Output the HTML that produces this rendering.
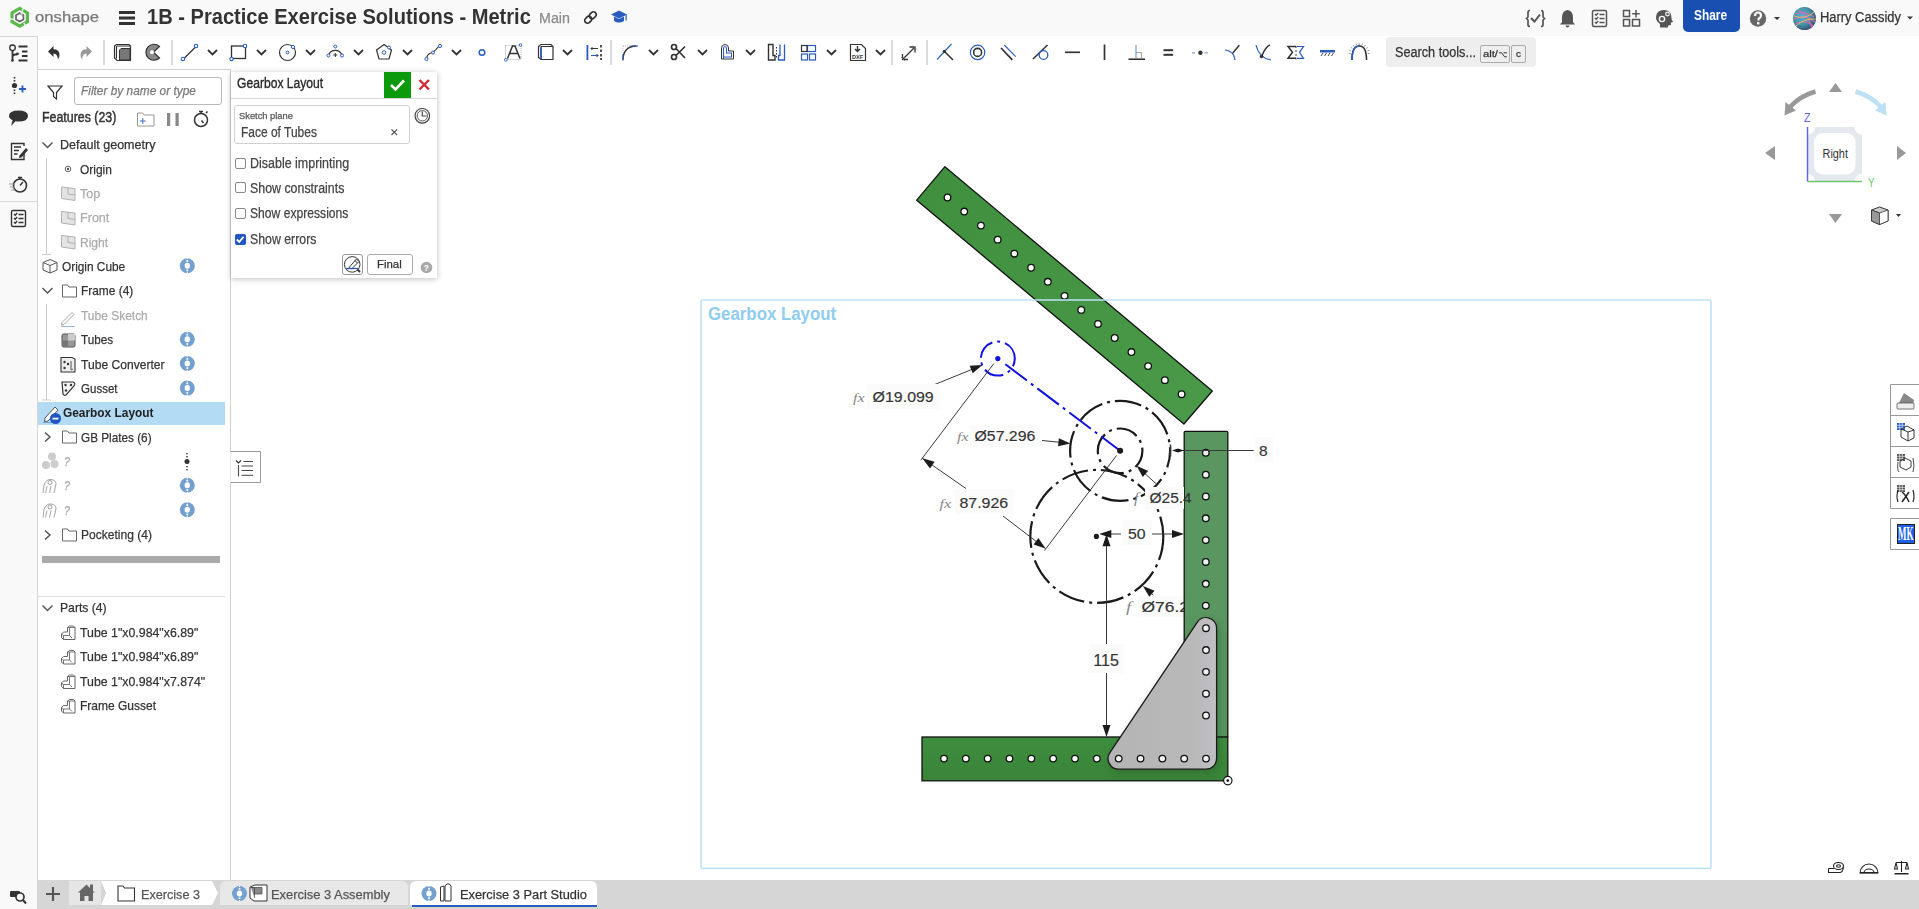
<!DOCTYPE html><html><head><meta charset="utf-8"><style>
*{box-sizing:border-box;margin:0;padding:0}
html,body{width:1919px;height:909px;overflow:hidden;background:#fff;font-family:"Liberation Sans",sans-serif;color:#333}
.a{position:absolute;white-space:nowrap}
.b{position:absolute}
svg{position:absolute;overflow:visible}
</style></head><body>
<div class="b" style="left:0px;top:0px;width:1919px;height:36px;background:#f9f9f9"></div>
<div class="b" style="left:0px;top:36px;width:38px;height:873px;background:#f9f9f9;border-top:1px solid #d6d6d6;border-right:1px solid #d6d6d6"></div>
<div class="b" style="left:38px;top:69px;width:193px;height:812px;background:#fff;border-top:1px solid #d0d0d0;border-right:1px solid #d0d0d0;border-bottom:1px solid #d0d0d0"></div>
<div class="b" style="left:38px;top:880px;width:1881px;height:29px;background:#d6d6d6"></div>
<div class="b" style="left:1683px;top:0px;width:57px;height:32px;background:#1a4fb2;border-radius:0 0 5px 5px"></div>
<div class="b" style="left:1386px;top:37px;width:150px;height:30px;background:#eeeeee;border-radius:4px"></div>
<div class="b" style="left:1480px;top:45px;width:29.5px;height:18px;border:1px solid #aaa;border-radius:2px"></div>
<div class="b" style="left:1510.5px;top:45px;width:15.5px;height:18px;border:1px solid #aaa;border-radius:2px"></div>
<div class="b" style="left:74px;top:77px;width:148px;height:28px;border:1px solid #bbb;border-radius:3px"></div>
<div class="b" style="left:38px;top:402px;width:187px;height:23px;background:#b3dcf4"></div>
<div class="b" style="left:42px;top:556px;width:178px;height:7px;background:#aaaaaa"></div>
<div class="b" style="left:38px;top:596px;width:187px;height:1px;background:#dddddd"></div>
<div class="b" style="left:69px;top:881px;width:32px;height:24px;background:#e6e6e6"></div>
<div class="b" style="left:220px;top:881px;width:188px;height:24px;background:#e8e8e8;border-radius:6px 6px 0 0"></div>
<div class="b" style="left:410px;top:881px;width:187px;height:24px;background:#ffffff;border-radius:6px 6px 0 0"></div>
<div class="b" style="left:412px;top:905px;width:185px;height:1.5px;background:#2a5bbf"></div>
<svg style="left:0;top:0" width="1919" height="909" viewBox="0 0 1919 909" font-family="Liberation Sans, sans-serif"><defs><linearGradient id="gb" x1="0" y1="0" x2="0" y2="1"><stop offset="0" stop-color="#3f8d3f"/><stop offset="1" stop-color="#3a8539"/></linearGradient><linearGradient id="gu" x1="0" y1="0" x2="1" y2="1"><stop offset="0" stop-color="#3f8f3f"/><stop offset="1" stop-color="#4a9a4a"/></linearGradient><linearGradient id="gg" x1="0" y1="0" x2="1" y2="0"><stop offset="0" stop-color="#b4b4b4"/><stop offset="0.8" stop-color="#b9b9b9"/><stop offset="1" stop-color="#c0c0c4"/></linearGradient><filter id="gsh" x="-20%" y="-20%" width="140%" height="140%"><feGaussianBlur stdDeviation="4"/></filter></defs><text transform="translate(708.00,320.40) scale(0.9293,1)" font-size="18.12" fill="#8fcdef" font-weight="bold" font-style="normal" >Gearbox Layout</text><polygon points="944.9,166.7 1212.3,391 1183.9,424 916.7,200.2" fill="url(#gu)" stroke="#111" stroke-width="1.3" stroke-linejoin="round"/><circle cx="947.50" cy="197.50" r="3.3" fill="#ffffff" stroke="#111" stroke-width="1.3"/><circle cx="964.22" cy="211.55" r="3.3" fill="#ffffff" stroke="#111" stroke-width="1.3"/><circle cx="980.94" cy="225.60" r="3.3" fill="#ffffff" stroke="#111" stroke-width="1.3"/><circle cx="997.66" cy="239.65" r="3.3" fill="#ffffff" stroke="#111" stroke-width="1.3"/><circle cx="1014.38" cy="253.70" r="3.3" fill="#ffffff" stroke="#111" stroke-width="1.3"/><circle cx="1031.10" cy="267.75" r="3.3" fill="#ffffff" stroke="#111" stroke-width="1.3"/><circle cx="1047.82" cy="281.80" r="3.3" fill="#ffffff" stroke="#111" stroke-width="1.3"/><circle cx="1064.54" cy="295.85" r="3.3" fill="#ffffff" stroke="#111" stroke-width="1.3"/><circle cx="1081.26" cy="309.90" r="3.3" fill="#ffffff" stroke="#111" stroke-width="1.3"/><circle cx="1097.98" cy="323.95" r="3.3" fill="#ffffff" stroke="#111" stroke-width="1.3"/><circle cx="1114.70" cy="338.00" r="3.3" fill="#ffffff" stroke="#111" stroke-width="1.3"/><circle cx="1131.42" cy="352.05" r="3.3" fill="#ffffff" stroke="#111" stroke-width="1.3"/><circle cx="1148.14" cy="366.10" r="3.3" fill="#ffffff" stroke="#111" stroke-width="1.3"/><circle cx="1164.86" cy="380.15" r="3.3" fill="#ffffff" stroke="#111" stroke-width="1.3"/><circle cx="1181.58" cy="394.20" r="3.3" fill="#ffffff" stroke="#111" stroke-width="1.3"/><text transform="translate(1126.00,611.50) scale(1.2603,1)" font-size="15.22" fill="#888" font-weight="normal" font-style="italic" font-family="Liberation Serif">f</text><rect x="1138" y="596" width="52" height="21" fill="#fbfbfb"/><text transform="translate(1141.40,612.30) scale(1.1264,1)" font-size="15.51" fill="#333" font-weight="normal" font-style="normal" stroke="#333" stroke-width="0.15">Ø76.2</text><rect x="1184.2" y="431.3" width="43.6" height="306" rx="1" fill="#5a9660" stroke="#111" stroke-width="1.3"/><circle cx="1205.80" cy="452.80" r="3.3" fill="#eceeef" stroke="#111" stroke-width="1.3"/><circle cx="1205.80" cy="474.63" r="3.3" fill="#eceeef" stroke="#111" stroke-width="1.3"/><circle cx="1205.80" cy="496.46" r="3.3" fill="#eceeef" stroke="#111" stroke-width="1.3"/><circle cx="1205.80" cy="518.29" r="3.3" fill="#eceeef" stroke="#111" stroke-width="1.3"/><circle cx="1205.80" cy="540.12" r="3.3" fill="#eceeef" stroke="#111" stroke-width="1.3"/><circle cx="1205.80" cy="561.95" r="3.3" fill="#eceeef" stroke="#111" stroke-width="1.3"/><circle cx="1205.80" cy="583.78" r="3.3" fill="#eceeef" stroke="#111" stroke-width="1.3"/><circle cx="1205.80" cy="605.61" r="3.3" fill="#eceeef" stroke="#111" stroke-width="1.3"/><circle cx="1205.80" cy="627.44" r="3.3" fill="#eceeef" stroke="#111" stroke-width="1.3"/><circle cx="1205.80" cy="649.27" r="3.3" fill="#eceeef" stroke="#111" stroke-width="1.3"/><circle cx="1205.80" cy="671.10" r="3.3" fill="#eceeef" stroke="#111" stroke-width="1.3"/><circle cx="1205.80" cy="692.93" r="3.3" fill="#eceeef" stroke="#111" stroke-width="1.3"/><circle cx="1205.80" cy="714.76" r="3.3" fill="#eceeef" stroke="#111" stroke-width="1.3"/><rect x="922" y="737" width="305.8" height="43.8" fill="url(#gb)" stroke="#111" stroke-width="1.3"/><circle cx="944.00" cy="758.60" r="3.3" fill="#ffffff" stroke="#111" stroke-width="1.3"/><circle cx="965.83" cy="758.60" r="3.3" fill="#ffffff" stroke="#111" stroke-width="1.3"/><circle cx="987.66" cy="758.60" r="3.3" fill="#ffffff" stroke="#111" stroke-width="1.3"/><circle cx="1009.49" cy="758.60" r="3.3" fill="#ffffff" stroke="#111" stroke-width="1.3"/><circle cx="1031.32" cy="758.60" r="3.3" fill="#ffffff" stroke="#111" stroke-width="1.3"/><circle cx="1053.15" cy="758.60" r="3.3" fill="#ffffff" stroke="#111" stroke-width="1.3"/><circle cx="1074.98" cy="758.60" r="3.3" fill="#ffffff" stroke="#111" stroke-width="1.3"/><circle cx="1096.81" cy="758.60" r="3.3" fill="#ffffff" stroke="#111" stroke-width="1.3"/><circle cx="1118.64" cy="758.60" r="3.3" fill="#ffffff" stroke="#111" stroke-width="1.3"/><circle cx="1140.47" cy="758.60" r="3.3" fill="#ffffff" stroke="#111" stroke-width="1.3"/><circle cx="1162.30" cy="758.60" r="3.3" fill="#ffffff" stroke="#111" stroke-width="1.3"/><circle cx="1184.13" cy="758.60" r="3.3" fill="#ffffff" stroke="#111" stroke-width="1.3"/><circle cx="1205.96" cy="758.60" r="3.3" fill="#ffffff" stroke="#111" stroke-width="1.3"/><path d="M1216.6,628.2 L1216.6,758.6 A10.6,10.6 0 0 1 1206,769.2 L1118.7,769.2 A10.6,10.6 0 0 1 1109.89,752.70 L1197.19,622.30 A10.6,10.6 0 0 1 1216.6,628.2 Z" fill="#1a3d1a" opacity="0.35" filter="url(#gsh)" transform="translate(2,3)"/><path d="M1216.6,628.2 L1216.6,758.6 A10.6,10.6 0 0 1 1206,769.2 L1118.7,769.2 A10.6,10.6 0 0 1 1109.89,752.70 L1197.19,622.30 A10.6,10.6 0 0 1 1216.6,628.2 Z" fill="url(#gg)" stroke="#1a1a1a" stroke-width="1.3"/><circle cx="1206.00" cy="628.20" r="3.3" fill="#f2f2f4" stroke="#111" stroke-width="1.3"/><circle cx="1206.00" cy="650.03" r="3.3" fill="#f2f2f4" stroke="#111" stroke-width="1.3"/><circle cx="1206.00" cy="671.86" r="3.3" fill="#f2f2f4" stroke="#111" stroke-width="1.3"/><circle cx="1206.00" cy="693.69" r="3.3" fill="#f2f2f4" stroke="#111" stroke-width="1.3"/><circle cx="1206.00" cy="715.52" r="3.3" fill="#f2f2f4" stroke="#111" stroke-width="1.3"/><circle cx="1118.70" cy="758.60" r="3.3" fill="#f2f2f4" stroke="#111" stroke-width="1.3"/><circle cx="1140.53" cy="758.60" r="3.3" fill="#f2f2f4" stroke="#111" stroke-width="1.3"/><circle cx="1162.36" cy="758.60" r="3.3" fill="#f2f2f4" stroke="#111" stroke-width="1.3"/><circle cx="1184.19" cy="758.60" r="3.3" fill="#f2f2f4" stroke="#111" stroke-width="1.3"/><circle cx="1206.02" cy="758.60" r="3.3" fill="#f2f2f4" stroke="#111" stroke-width="1.3"/><circle cx="1227.8" cy="780.6" r="4.2" fill="#fff" stroke="#111" stroke-width="1.2"/><circle cx="1227.8" cy="780.6" r="1.3" fill="#111"/><rect x="701" y="300" width="1010" height="568.4" rx="1.5" fill="none" stroke="#c0e2f6" stroke-width="1.6"/><circle cx="1120.1" cy="450.8" r="50" fill="none" stroke="#1a1a1a" stroke-width="2.2" stroke-dasharray="27 5 3 5" stroke-dashoffset="10"/><circle cx="1120.1" cy="450.8" r="22.3" fill="none" stroke="#1a1a1a" stroke-width="2.2" stroke-dasharray="22 5 3 5" stroke-dashoffset="4"/><circle cx="1096.8" cy="536.4" r="66.5" fill="none" stroke="#1a1a1a" stroke-width="2.2" stroke-dasharray="27 5 3 5" stroke-dashoffset="3"/><circle cx="997.8" cy="358.6" r="17" fill="none" stroke="#1010e0" stroke-width="2" stroke-dasharray="20 5 3 5" stroke-dashoffset="12"/><line x1="1005.39" y1="364.32" x2="1120.10" y2="450.80" stroke="#1010e0" stroke-width="2" stroke-dasharray="27 5 3 5"/><circle cx="997.8" cy="358.6" r="2.6" fill="#1010e0"/><circle cx="1120.1" cy="450.8" r="3" fill="#1a1a1a"/><circle cx="1096.3999999999999" cy="536.4" r="2.6" fill="#1a1a1a"/><line x1="935.00" y1="384.40" x2="975.00" y2="368.20" stroke="#3a3a3a" stroke-width="1" /><polygon points="982.30,365.00 972.72,373.25 969.68,365.85" fill="#1a1a1a"/><rect x="867" y="384" width="73" height="25" fill="#fbfbfb"/><text transform="translate(853.00,402.00) scale(1.2305,1)" font-size="13.04" fill="#888" font-weight="normal" font-style="italic" font-family="Liberation Serif">fx</text><text transform="translate(872.60,402.20) scale(1.0274,1)" font-size="15.51" fill="#333" font-weight="normal" font-style="normal" stroke="#333" stroke-width="0.15">Ø19.099</text><line x1="993.80" y1="363.60" x2="920.80" y2="460.20" stroke="#3a3a3a" stroke-width="1" /><line x1="1116.50" y1="455.50" x2="1044.50" y2="550.50" stroke="#3a3a3a" stroke-width="1" /><line x1="922.40" y1="458.30" x2="966.00" y2="488.50" stroke="#3a3a3a" stroke-width="1" /><polygon points="922.40,458.30 934.54,461.84 929.99,468.42" fill="#1a1a1a"/><line x1="1003.00" y1="516.00" x2="1045.50" y2="548.50" stroke="#3a3a3a" stroke-width="1" /><polygon points="1045.50,548.50 1033.54,544.39 1038.40,538.03" fill="#1a1a1a"/><rect x="955" y="489" width="58" height="25" fill="#fbfbfb"/><text transform="translate(939.60,507.70) scale(1.2494,1)" font-size="13.04" fill="#888" font-weight="normal" font-style="italic" font-family="Liberation Serif">fx</text><text transform="translate(959.40,507.70) scale(1.0284,1)" font-size="15.51" fill="#333" font-weight="normal" font-style="normal" stroke="#333" stroke-width="0.15">87.926</text><line x1="1042.00" y1="440.50" x2="1062.00" y2="442.50" stroke="#3a3a3a" stroke-width="1" /><polygon points="1070.40,443.50 1058.05,446.22 1058.89,438.26" fill="#1a1a1a"/><rect x="970" y="426" width="70" height="21" fill="#fbfbfb"/><text transform="translate(957.00,441.00) scale(1.2305,1)" font-size="13.04" fill="#888" font-weight="normal" font-style="italic" font-family="Liberation Serif">fx</text><text transform="translate(974.50,440.90) scale(1.0224,1)" font-size="15.51" fill="#333" font-weight="normal" font-style="normal" stroke="#333" stroke-width="0.15">Ø57.296</text><line x1="1156.00" y1="483.70" x2="1143.00" y2="471.70" stroke="#3a3a3a" stroke-width="1" /><polygon points="1136.60,465.80 1148.13,471.00 1142.71,476.88" fill="#1a1a1a"/><rect x="1145" y="487" width="39" height="22" fill="#fbfbfb"/><text transform="translate(1134.00,503.00) scale(1.0802,1)" font-size="15.22" fill="#888" font-weight="normal" font-style="italic" font-family="Liberation Serif">f</text><text x="1149.50" y="503.00" font-size="15.51" fill="#333" font-weight="normal" font-style="normal" stroke="#333" stroke-width="0.15">Ø25.4</text><line x1="1176.00" y1="450.50" x2="1253.70" y2="450.50" stroke="#3a3a3a" stroke-width="1" /><line x1="1170.50" y1="444.50" x2="1170.50" y2="456.50" stroke="#3a3a3a" stroke-width="1.6" /><polygon points="1172.00,450.50 1178.00,448.50 1178.00,452.50" fill="#1a1a1a"/><polygon points="1184.00,450.50 1178.00,452.50 1178.00,448.50" fill="#1a1a1a"/><rect x="1255" y="437" width="18" height="25" fill="#fbfbfb"/><text transform="translate(1259.00,456.00) scale(1.0087,1)" font-size="15.36" fill="#333" font-weight="normal" font-style="normal" stroke="#333" stroke-width="0.15">8</text><line x1="1109.00" y1="534.00" x2="1121.00" y2="534.00" stroke="#3a3a3a" stroke-width="1" /><line x1="1152.00" y1="534.00" x2="1174.00" y2="534.00" stroke="#3a3a3a" stroke-width="1" /><polygon points="1099.30,534.00 1111.30,530.00 1111.30,538.00" fill="#1a1a1a"/><polygon points="1184.00,534.00 1172.00,538.00 1172.00,530.00" fill="#1a1a1a"/><rect x="1122" y="520" width="30" height="25" fill="#fbfbfb"/><text transform="translate(1128.00,539.00) scale(1.0726,1)" font-size="14.78" fill="#333" font-weight="normal" font-style="normal" stroke="#333" stroke-width="0.15">50</text><line x1="1106.50" y1="545.00" x2="1106.50" y2="645.00" stroke="#3a3a3a" stroke-width="1" /><line x1="1106.50" y1="673.00" x2="1106.50" y2="727.00" stroke="#3a3a3a" stroke-width="1" /><polygon points="1106.50,534.30 1110.50,546.30 1102.50,546.30" fill="#1a1a1a"/><polygon points="1106.50,737.00 1102.50,725.00 1110.50,725.00" fill="#1a1a1a"/><rect x="1089" y="644" width="35" height="29" fill="#fbfbfb"/><text transform="translate(1093.20,665.60) scale(1.0107,1)" font-size="15.94" fill="#333" font-weight="normal" font-style="normal" stroke="#333" stroke-width="0.15">115</text><line x1="1153.40" y1="595.10" x2="1148.00" y2="590.50" stroke="#3a3a3a" stroke-width="1" /><polygon points="1142.90,585.90 1154.56,590.80 1149.29,596.82" fill="#1a1a1a"/><path d="M230.5,451.5 L260.5,451.5 L260.5,482.5 L230.5,482.5" fill="#fff" stroke="#999" stroke-width="1"/><path d="M236,460.5 L238.5,463 L241,460.5" fill="none" stroke="#333" stroke-width="1.2"/><line x1="238.5" y1="465" x2="238.5" y2="476.5" stroke="#555" stroke-width="1.2"/><path d="M243.5,461.5 h9.5 M241.5,466 h11.5 M241.5,470.5 h11.5 M241.5,475.3 h11.5" stroke="#444" stroke-width="1"/><path d="M1815.5,91.5 Q1800,96 1790,107" fill="none" stroke="#999" stroke-width="4.5"/><polygon points="1784.5,115.5 1785.5,102 1796,110.5" fill="#999"/><path d="M1855.5,91.5 Q1871,96 1881,107" fill="none" stroke="#bde0f3" stroke-width="4.5"/><polygon points="1886.5,115.5 1885.5,102 1875,110.5" fill="#bde0f3"/><polygon points="1829,92 1842,92 1835.5,83" fill="#999"/><polygon points="1829,214 1842,214 1835.5,223" fill="#999"/><polygon points="1775,146 1775,160 1765,153" fill="#999"/><polygon points="1897,146 1897,160 1906,153" fill="#999"/><path d="M1807.5,127 L1862,127 L1862,181.5 L1807.5,181.5 Z" fill="#e3e9ef"/><circle cx="1807.5" cy="127" r="7.5" fill="#fff"/><circle cx="1862" cy="127" r="7.5" fill="#fff"/><circle cx="1807.5" cy="181.5" r="7.5" fill="#fff"/><circle cx="1862" cy="181.5" r="7.5" fill="#fff"/><rect x="1814" y="133" width="41.5" height="41.5" rx="9" fill="#fff"/><line x1="1807.5" y1="127" x2="1807.5" y2="181.5" stroke="#6464ee" stroke-width="1.5"/><line x1="1807.5" y1="181.5" x2="1862" y2="181.5" stroke="#6cc46c" stroke-width="1.5"/><text transform="translate(1804.00,122.00) scale(0.8650,1)" font-size="12.32" fill="#6464ee" font-weight="normal" font-style="normal" >Z</text><text transform="translate(1868.00,187.00) scale(0.7935,1)" font-size="12.32" fill="#6cc46c" font-weight="normal" font-style="normal" >Y</text><text transform="translate(1822.50,158.00) scale(0.8865,1)" font-size="12.32" fill="#333" font-weight="normal" font-style="normal" >Right</text><path d="M1871.5,210 L1879.5,207 L1888,210 L1888,221 L1879.5,224.5 L1871.5,221 Z" fill="#ccc" stroke="#333" stroke-width="1"/><path d="M1871.5,210 L1879.5,213 L1888,210 L1888,221 L1879.5,224.5 Z" fill="#fff" stroke="#333" stroke-width="0.8"/><path d="M1871.5,210 L1879.5,213 L1879.5,224.5 L1871.5,221 Z" fill="#999" stroke="#333" stroke-width="0.8"/><polygon points="1896,214 1901,214 1898.5,217" fill="#333"/><path d="M1919,384.5 L1890.5,384.5 L1890.5,508.5 L1919,508.5 M1890.5,415.5 L1919,415.5 M1890.5,446.5 L1919,446.5 M1890.5,477.5 L1919,477.5 M1919,518.5 L1890.5,518.5 L1890.5,549.5 L1919,549.5" fill="#fff" stroke="#999" stroke-width="1"/><path d="M1897,407 L1904,393 L1914,400 L1913,407 Z" fill="#888"/><rect x="1897" y="403" width="17" height="6" rx="1" fill="#eee" stroke="#555" stroke-width="0.8"/><rect x="1897" y="423" width="8" height="7" fill="#2a5bd8"/><path d="M1899.7,423 v7 M1902.3,423 v7 M1897,425.3 h8 M1897,427.7 h8" stroke="#fff" stroke-width="0.6"/><path d="M1901,429 L1907,426 L1914,430 L1914,438 L1908,441 L1901,437 Z M1901,429 L1908,432 L1914,430 M1908,432 L1908,441" fill="none" stroke="#222" stroke-width="0.9"/><rect x="1897" y="454" width="8" height="7" fill="#555"/><path d="M1899.7,454 v7 M1902.3,454 v7 M1897,456.3 h8 M1897,458.7 h8" stroke="#fff" stroke-width="0.6"/><path d="M1900,461 L1905,458 L1911,461 L1911,467 L1906,470 L1900,467 Z" fill="none" stroke="#222" stroke-width="0.9"/><path d="M1898,462 Q1897,470 1899,472 M1913,458 Q1915,466 1913,472" fill="none" stroke="#333" stroke-width="0.9"/><rect x="1897" y="485" width="8" height="7" fill="#555"/><path d="M1899.7,485 v7 M1902.3,485 v7 M1897,487.3 h8 M1897,489.7 h8" stroke="#fff" stroke-width="0.6"/><path d="M1898,490 Q1896,497 1898,502 M1913,490 Q1915,497 1913,502" fill="none" stroke="#222" stroke-width="1.2"/><path d="M1902,502 L1909,492 M1902,492 Q1906,495 1909,502" fill="none" stroke="#222" stroke-width="1.5"/><rect x="1897.5" y="524.5" width="17" height="19" fill="#1f5fe8" stroke="#222" stroke-width="1"/><text transform="translate(1898,539.5) scale(0.5,1)" font-family="Liberation Serif" font-size="18" font-weight="bold" fill="#fff">MK</text><g fill="none" stroke="#222" stroke-width="1.1"><ellipse cx="1838.5" cy="866" rx="5" ry="3.5"/><ellipse cx="1838.5" cy="866" rx="2" ry="1.2"/><path d="M1828.5,868.5 L1834,868.5 M1828.5,868.5 L1828.5,872.5 L1840,872.5 Q1843,872 1843.5,867"/></g><path d="M1860,873 A9,9 0 0 1 1878,873 Z M1864,873 A5,4 0 0 1 1874,873" fill="none" stroke="#222" stroke-width="1.1"/><rect x="1860" y="872" width="18" height="1.3" fill="#222"/><g stroke="#222" fill="none" stroke-width="1.1"><path d="M1901.5,861 L1901.5,872 M1896,862.5 L1907,862.5 M1896,862.5 L1894.5,869 L1897.5,869 Z M1907,862.5 L1905.5,869 L1908.5,869 Z"/></g><rect x="1894.5" y="873" width="14" height="1.5" fill="#222"/></svg>
<svg style="left:0;top:0" width="1919" height="909" viewBox="0 0 1919 909"><g transform="translate(19.7,17.3)"><polygon points="0,-8.9 7.7,-4.45 7.7,4.45 0,8.9 -7.7,4.45 -7.7,-4.45" fill="none" stroke="#5cb84c" stroke-width="3.2" stroke-linejoin="miter"/><path d="M2.5,-5.5 L3.5,-9.5 M-4.5,2 L-10,1.5 M4.2,5.5 L6,9.5" stroke="#f9f9f9" stroke-width="1.3"/><polygon points="0,-4.3 3.7,-2.15 3.7,2.15 0,4.3 -3.7,2.15 -3.7,-2.15" fill="none" stroke="#666" stroke-width="1.7"/><path d="M1.2,-4.5 L2.2,-2.5" stroke="#f9f9f9" stroke-width="1"/></g><rect x="119" y="11" width="16" height="3" fill="#333"/><rect x="119" y="16.5" width="16" height="3" fill="#333"/><rect x="119" y="22" width="16" height="3" fill="#333"/><g transform="translate(590.5,17.5) rotate(-45)" fill="none" stroke="#333" stroke-width="1.7"><rect x="-7" y="-2.8" width="7.5" height="5.6" rx="2.8"/><rect x="-0.5" y="-2.8" width="7.5" height="5.6" rx="2.8"/></g><g fill="#2a5bbf"><polygon points="611,14.5 619,10.5 627,14.5 619,18.5"/><path d="M614,16.5 L614,21 Q619,24 624,21 L624,16.5 L619,19 Z"/><rect x="625.5" y="14.5" width="1.2" height="6"/></g><g fill="none" stroke="#555" stroke-width="1.7"><path d="M1530,10.5 Q1528,10.5 1528,12.5 L1528,17 L1526.5,18.5 L1528,20 L1528,24.5 Q1528,26.5 1530,26.5"/><path d="M1541,10.5 Q1543,10.5 1543,12.5 L1543,17 L1544.5,18.5 L1543,20 L1543,24.5 Q1543,26.5 1541,26.5"/><path d="M1531,18 L1534.5,21.5 L1540,14.5" stroke-width="2"/></g><path d="M1567.5,10 Q1573,10.5 1573,18 L1573,22 L1575,24.5 L1560,24.5 L1562,22 L1562,18 Q1562,10.5 1567.5,10 Z M1565.5,25.5 L1569.5,25.5 Q1569,27.5 1567.5,27.5 Q1566,27.5 1565.5,25.5Z" fill="#555"/><g fill="none" stroke="#555" stroke-width="1.5"><rect x="1592.5" y="10.5" width="14" height="16" rx="1.5"/><path d="M1595,14 l1.2,1.2 l2,-2.2 M1595,18 l1.2,1.2 l2,-2.2 M1595,22 l1.2,1.2 l2,-2.2 M1599.5,14.5 h5 M1599.5,18.5 h5 M1599.5,22.5 h5"/></g><g fill="none" stroke="#555" stroke-width="1.5"><rect x="1623.5" y="10.5" width="6" height="6"/><rect x="1623.5" y="19.5" width="6" height="6.5"/><rect x="1632.5" y="19.5" width="7" height="6.5"/><path d="M1636,10 v7.5 M1632.2,13.75 h7.5"/></g><path d="M1664,10 Q1671.5,10 1671.5,17.5 L1671.5,19 L1673,22 L1671,22.5 L1671,25 L1668,25.5 L1668,27.5 L1660,27.5 L1660,24 Q1656,21 1656,17.5 Q1656,10 1664,10 Z" fill="#555"/><circle cx="1662" cy="19" r="2.6" fill="none" stroke="#f9f9f9" stroke-width="1.4"/><circle cx="1667.5" cy="14" r="1.8" fill="none" stroke="#f9f9f9" stroke-width="1.2"/><circle cx="1758" cy="18.5" r="8.2" fill="#666"/><path d="M1755,16 Q1755,12.5 1758,12.5 Q1761,12.5 1761,15.5 Q1761,17.5 1758.8,18.5 L1758.2,20.5" fill="none" stroke="#f9f9f9" stroke-width="2.2"/><rect x="1757" y="22" width="2.4" height="2.4" fill="#f9f9f9"/><polygon points="1774,17 1780,17 1777,20" fill="#333"/><defs><radialGradient id="av" cx="40%" cy="40%" r="70%"><stop offset="0" stop-color="#5ad"/><stop offset="0.5" stop-color="#49a"/><stop offset="1" stop-color="#333a66"/></radialGradient></defs><circle cx="1804.5" cy="18.5" r="11.5" fill="url(#av)"/><path d="M1795,14 Q1805,10 1814,17 M1794,19 Q1805,14 1815,22 M1796,24 Q1806,19 1813,26 M1798,10 Q1808,14 1812,28" fill="none" stroke="#e6a" stroke-width="1.2" opacity="0.8"/><path d="M1794,16 Q1806,20 1814,12 M1796,26 Q1804,18 1816,19" fill="none" stroke="#ec5" stroke-width="1" opacity="0.8"/><polygon points="1907,16.5 1913,16.5 1910,19.5" fill="#333"/><path d="M48,51.5 L53.5,46 L53.5,49.3 Q59.5,49.3 59.5,55 Q59.5,57.5 58,59.5 Q57.5,53.5 53.5,53.5 L53.5,57 Z" fill="#333"/><path d="M92,51.5 L86.5,46 L86.5,49.3 Q80.5,49.3 80.5,55 Q80.5,57.5 82,59.5 Q82.5,53.5 86.5,53.5 L86.5,57 Z" fill="#999"/><rect x="103.25" y="40" width="1.5" height="25" fill="#cfcfcf"/><rect x="171.25" y="40" width="1.5" height="25" fill="#cfcfcf"/><rect x="610.25" y="40" width="1.5" height="25" fill="#cfcfcf"/><rect x="891.25" y="40" width="1.5" height="25" fill="#cfcfcf"/><rect x="926.25" y="40" width="1.5" height="25" fill="#cfcfcf"/><g fill="none" stroke="#333" stroke-width="1.2"><path d="M114.5,46 L116.5,44.5 L129,44.5 L130.5,46 L130.5,60.5 L117,60.5 L114.5,58 Z"/><path d="M116.5,46 L116.5,58.5 M117,46 L130,46"/></g><path d="M119.5,50 L121,48.5 L130,48.5 L130,60 L119.5,60 Z" fill="#777" stroke="#333" stroke-width="1"/><path d="M159.5,46.5 A8,8 0 1 0 159.5,58 L153.5,52.2 Z" fill="#888" stroke="#333" stroke-width="1.2"/><circle cx="152" cy="52.2" r="2" fill="#fff"/><line x1="183.5" y1="59" x2="196.5" y2="46" stroke="#333" stroke-width="1.3"/><circle cx="183" cy="59" r="1.7" fill="#fff" stroke="#2a5bbf" stroke-width="1.1"/><circle cx="196" cy="46" r="1.7" fill="#fff" stroke="#2a5bbf" stroke-width="1.1"/><path d="M208 50.0 L212.5 54.5 L217 50.0" fill="none" stroke="#333" stroke-width="1.8"/><rect x="231.5" y="46" width="14" height="12.5" fill="none" stroke="#333" stroke-width="1.3"/><circle cx="231.5" cy="59" r="1.7" fill="#fff" stroke="#2a5bbf" stroke-width="1.1"/><circle cx="245" cy="46" r="1.7" fill="#fff" stroke="#2a5bbf" stroke-width="1.1"/><path d="M257 50.0 L261.5 54.5 L266 50.0" fill="none" stroke="#333" stroke-width="1.8"/><circle cx="287.5" cy="52.5" r="8" fill="none" stroke="#333" stroke-width="1.2"/><circle cx="287.5" cy="52.5" r="1.4" fill="none" stroke="#2a5bbf" stroke-width="1"/><circle cx="293" cy="47" r="1.6" fill="#fff" stroke="#2a5bbf" stroke-width="1"/><path d="M306 50.0 L310.5 54.5 L315 50.0" fill="none" stroke="#333" stroke-width="1.8"/><path d="M328.5,55.5 A7,7 0 0 1 342,55.5" fill="none" stroke="#333" stroke-width="1.2"/><circle cx="328.5" cy="55.5" r="1.5" fill="#fff" stroke="#2a5bbf" stroke-width="1"/><circle cx="342" cy="55.5" r="1.5" fill="#fff" stroke="#2a5bbf" stroke-width="1"/><circle cx="335.3" cy="46.5" r="1.5" fill="#fff" stroke="#2a5bbf" stroke-width="1"/><path d="M335.3,53 v4 M333.3,55 h4" stroke="#333" stroke-width="1"/><path d="M354 50.0 L358.5 54.5 L363 50.0" fill="none" stroke="#333" stroke-width="1.8"/><polygon points="384,44.5 391.5,50 389,59 379,59 376.5,50" fill="none" stroke="#333" stroke-width="1.2"/><circle cx="384" cy="52.5" r="1.8" fill="none" stroke="#2a5bbf" stroke-width="1"/><circle cx="389" cy="47.5" r="1.5" fill="#fff" stroke="#2a5bbf" stroke-width="1"/><path d="M403 50.0 L407.5 54.5 L412 50.0" fill="none" stroke="#333" stroke-width="1.8"/><path d="M426.5,59 Q427,54 431,53 Q434,52 436,49.5 Q438,46.5 440,46" fill="none" stroke="#333" stroke-width="1.2"/><circle cx="426.5" cy="59" r="1.6" fill="#fff" stroke="#2a5bbf" stroke-width="1"/><circle cx="433" cy="52.5" r="1.5" fill="#fff" stroke="#2a5bbf" stroke-width="1"/><circle cx="440" cy="46" r="1.6" fill="#fff" stroke="#2a5bbf" stroke-width="1"/><path d="M452 50.0 L456.5 54.5 L461 50.0" fill="none" stroke="#333" stroke-width="1.8"/><circle cx="482" cy="52.5" r="2.8" fill="none" stroke="#2a5bbf" stroke-width="1.5"/><rect x="505.5" y="45.5" width="15.5" height="14" fill="none" stroke="#777" stroke-width="0.6" stroke-dasharray="1,1"/><path d="M507.5,58.5 L512.5,46 L515,46 L520,58.5 M510,53.5 L517.5,53.5" fill="none" stroke="#333" stroke-width="1.5"/><circle cx="520.5" cy="45" r="1.4" fill="#fff" stroke="#2a5bbf" stroke-width="0.9"/><circle cx="505.8" cy="59.8" r="1.4" fill="#fff" stroke="#2a5bbf" stroke-width="0.9"/><g fill="none" stroke="#333" stroke-width="1.2"><path d="M538.5,46.5 L541,44.5 L551,44.5 L553,46.5 L553,59.5 L541,59.5 L538.5,57.5 Z M541,46.5 L553,46.5 M541,46.5 L541,59.5"/></g><line x1="541" y1="47" x2="541" y2="59.5" stroke="#2a5bbf" stroke-width="1.5"/><path d="M563 50.0 L567.5 54.5 L572 50.0" fill="none" stroke="#333" stroke-width="1.8"/><rect x="586.5" y="45" width="1.8" height="15" fill="#2a5bbf"/><path d="M598,48.5 L591,48.5 M592.5,47 L591,48.5 L592.5,50 M591,55.5 L598,55.5 M596.5,54 L598,55.5 L596.5,57" fill="none" stroke="#333" stroke-width="1"/><path d="M591,55.5 L597,55.5" stroke="#2a5bbf" stroke-width="1.1"/><path d="M601,45 v2.5 M601,49.5 v2.5 M601,54 v2.5 M601,58 v2" stroke="#333" stroke-width="1.7"/><path d="M623,60 Q623,46.5 636.5,46" fill="none" stroke="#333" stroke-width="1.3"/><path d="M623,54 L623,60.5 M630.5,46 L638,46" stroke="#2a5bbf" stroke-width="1.1"/><path d="M623,46 L623,53 M623,46 L630,46" stroke="#999" stroke-width="0.6" stroke-dasharray="1,1"/><path d="M649 50.0 L653.5 54.5 L658 50.0" fill="none" stroke="#333" stroke-width="1.8"/><g fill="none" stroke="#333" stroke-width="1.7"><circle cx="674" cy="47" r="2.5"/><circle cx="674" cy="57" r="2.5"/><path d="M676,48.5 L685,58 M676,55.5 L685,46.5"/></g><path d="M698 50.0 L702.5 54.5 L707 50.0" fill="none" stroke="#333" stroke-width="1.8"/><path d="M721.5,59 L721.5,48 Q721.5,44.5 725,44.5 Q728.5,44.5 728.5,48 L728.5,51 L733.5,51 L733.5,59 Z" fill="none" stroke="#333" stroke-width="1"/><path d="M723.5,59 L723.5,48.5 Q723.5,46.5 725,46.5 Q726.5,46.5 726.5,48.5 L726.5,53 L731.5,53 L731.5,57 L723.5,57" fill="none" stroke="#2a5bbf" stroke-width="1.1"/><path d="M746 50.0 L750.5 54.5 L755 50.0" fill="none" stroke="#333" stroke-width="1.8"/><path d="M768.5,44.5 L773,44.5 L773,55.5 L775,55.5 L775,60 L768.5,60 Z" fill="none" stroke="#333" stroke-width="1.4"/><path d="M784.5,44.5 L784.5,60 L778.5,60 L778.5,55.5 L780,55.5 L780,44.5" fill="none" stroke="#2a5bbf" stroke-width="1.3"/><path d="M776.5,47 v1.5 M776.5,50 v1.5 M776.5,53 v1.5 M776.5,56 v1.5" stroke="#333" stroke-width="1"/><g fill="none" stroke="#2a5bbf" stroke-width="1.2"><rect x="807.5" y="45.5" width="8" height="6"/><rect x="801.5" y="54" width="6" height="6"/><rect x="809.5" y="54" width="6" height="6"/></g><rect x="801.5" y="45.5" width="5.5" height="6" fill="none" stroke="#333" stroke-width="1.2"/><path d="M827 50.0 L831.5 54.5 L836 50.0" fill="none" stroke="#333" stroke-width="1.8"/><path d="M850.5,44.5 L861.5,44.5 L865.5,48.5 L865.5,60.5 L850.5,60.5 Z" fill="none" stroke="#333" stroke-width="1.2"/><path d="M857.5,46 L857.5,51 M855,49 L857.5,51.5 L860,49" fill="none" stroke="#333" stroke-width="1.4"/><text x="852" y="59" font-size="5.5" font-weight="bold" fill="#333">DXF</text><path d="M876 50.0 L880.5 54.5 L885 50.0" fill="none" stroke="#333" stroke-width="1.8"/><g fill="none" stroke="#333" stroke-width="1.3"><path d="M903,59 L914.5,47.5"/><path d="M902.5,54 L902.5,59.5 L908,59.5 M909.5,47 L915,47 L915,52.5"/></g><path d="M913,45.5 L917,49.5 M901,57 L905,61" stroke="#888" stroke-width="0.8"/><line x1="937" y1="59.5" x2="951.5" y2="44" stroke="#2a5bbf" stroke-width="1.1"/><line x1="944.5" y1="51.5" x2="953" y2="60" stroke="#333" stroke-width="1.6"/><circle cx="944.3" cy="51.4" r="1.6" fill="#333"/><circle cx="977.6" cy="52.4" r="7.2" fill="none" stroke="#2a5bbf" stroke-width="1.2"/><circle cx="977.6" cy="52.4" r="4" fill="none" stroke="#333" stroke-width="1.6"/><line x1="1001" y1="48" x2="1012.3" y2="59.8" stroke="#333" stroke-width="1.7"/><line x1="1004.3" y1="45" x2="1015.7" y2="56.6" stroke="#2a5bbf" stroke-width="1.1"/><line x1="1033" y1="59" x2="1047.5" y2="45" stroke="#333" stroke-width="1.6"/><circle cx="1043.5" cy="55" r="4.3" fill="none" stroke="#2a5bbf" stroke-width="1.3"/><line x1="1065" y1="52.3" x2="1080" y2="52.3" stroke="#333" stroke-width="1.7"/><line x1="1104.5" y1="44.5" x2="1104.5" y2="60" stroke="#333" stroke-width="1.7"/><line x1="1128.5" y1="59.2" x2="1145" y2="59.2" stroke="#333" stroke-width="1.6"/><line x1="1136" y1="45" x2="1136" y2="58.5" stroke="#6f95d8" stroke-width="1.1"/><path d="M1136,52.5 L1141.5,52.5 L1141.5,58.5" fill="none" stroke="#999" stroke-width="0.9"/><rect x="1163.5" y="49.2" width="9.6" height="2" fill="#333"/><rect x="1163.5" y="53.8" width="9.6" height="2" fill="#333"/><path d="M1192,52.8 h3 M1204.5,52.8 h3.5" stroke="#8aa8e0" stroke-width="1.3"/><circle cx="1200.4" cy="52.8" r="2.2" fill="#333"/><path d="M1225,50 Q1234,51 1235,60" fill="none" stroke="#2a5bbf" stroke-width="1.2"/><line x1="1232.8" y1="53" x2="1239.3" y2="45.3" stroke="#333" stroke-width="1.5"/><path d="M1256,45 Q1259,58 1271,60" fill="none" stroke="#2a5bbf" stroke-width="1.1"/><path d="M1261.5,56.5 Q1266,46 1270,45" fill="none" stroke="#333" stroke-width="1.5"/><circle cx="1261.5" cy="56.5" r="1.8" fill="#333"/><path d="M1296,46.5 L1288,46.5 L1292.5,52.3 L1288,58.3 L1296,58.3" fill="none" stroke="#333" stroke-width="1.5"/><path d="M1296,46 v2 M1296,50 v2 M1296,54 v2 M1296,57.5 v2" stroke="#333" stroke-width="0.9"/><path d="M1297,46.5 L1303.5,46.5 L1299.5,52.3 L1303.5,58.3 L1297,58.3" fill="none" stroke="#2a5bbf" stroke-width="1.2"/><rect x="1320" y="50" width="15" height="2.5" fill="#2a5bbf"/><path d="M1321,56 l2,-3 M1324.5,56 l2,-3 M1328,56 l2,-3 M1331.5,56 l2,-3" stroke="#333" stroke-width="0.9"/><path d="M1352,60 Q1352,46 1359.3,46 Q1366.5,46 1366.5,60" fill="none" stroke="#333" stroke-width="1.6"/><path d="M1352,60 Q1352,46 1359.3,46" fill="none" stroke="#2a5bbf" stroke-width="1.6"/><line x1="1367.8" y1="53.5" x2="1369.8" y2="53.5" stroke="#555" stroke-width="0.6"/><line x1="1367.3839803885087" y1="50.87335554781295" x2="1369.2860934210992" y2="50.25532155906305" stroke="#555" stroke-width="0.6"/><line x1="1366.176644452187" y1="48.50382535551398" x2="1367.7946784409369" y2="47.328254850929035" stroke="#555" stroke-width="0.6"/><line x1="1364.296174644486" y1="46.62335554781295" x2="1365.471745149071" y2="45.00532155906305" stroke="#555" stroke-width="0.6"/><line x1="1361.926644452187" y1="45.416019611491194" x2="1362.5446784409369" y2="43.51390657890089" stroke="#555" stroke-width="0.6"/><line x1="1359.3" y1="45.0" x2="1359.3" y2="43.0" stroke="#555" stroke-width="0.6"/><line x1="1356.673355547813" y1="45.416019611491194" x2="1356.055321559063" y2="43.51390657890089" stroke="#555" stroke-width="0.6"/><line x1="1354.303825355514" y1="46.62335554781295" x2="1353.128254850929" y2="45.00532155906305" stroke="#555" stroke-width="0.6"/><line x1="1352.423355547813" y1="48.503825355513975" x2="1350.805321559063" y2="47.32825485092903" stroke="#555" stroke-width="0.6"/><line x1="1351.2160196114912" y1="50.87335554781295" x2="1349.3139065789007" y2="50.25532155906305" stroke="#555" stroke-width="0.6"/><line x1="1350.8" y1="53.5" x2="1348.8" y2="53.5" stroke="#555" stroke-width="0.6"/><g fill="none" stroke="#333" stroke-width="1.8"><circle cx="12.5" cy="47.8" r="2.8" stroke-width="1.3"/><path d="M12.5,50.5 L12.5,61 M12.5,57 Q12.5,54.5 15.5,54.5 L17,54.5"/><path d="M18.5,46.5 h9 M22,51.5 h5.5 M22,56 h5.5 M18.5,60.5 h9"/></g><circle cx="12.5" cy="60.5" r="1.3" fill="#333"/><circle cx="17.5" cy="53.8" r="1.4" fill="#333"/><g fill="#333"><circle cx="14.5" cy="85.5" r="2.6"/><rect x="13.7" y="77" width="1.6" height="1.6"/><rect x="13.7" y="80" width="1.6" height="1.6"/><rect x="13.7" y="89.5" width="1.6" height="1.6"/><rect x="13.7" y="92.5" width="1.6" height="1.6"/></g><path d="M19,89 h7 M22.5,85.5 v7" stroke="#2a5bbf" stroke-width="1.8"/><path d="M18.5,110.5 Q28,110.5 28,116 Q28,121.5 18.5,121.5 Q17,121.5 15.5,121.2 L11,126 L12.5,120.2 Q9,118.5 9,116 Q9,110.5 18.5,110.5 Z" fill="#333"/><g fill="none" stroke="#333" stroke-width="1.4"><path d="M24,151 L24,159.5 L11.5,159.5 L11.5,143.5 L24,143.5 L24,146"/><path d="M14,147 h7 M14,150.5 h5 M14,154 h3.5"/></g><path d="M19.5,155.5 L26,148 L28,150 L21.5,157.5 L19,158 Z" fill="#333"/><g fill="none" stroke="#333" stroke-width="1.6"><circle cx="20" cy="185.5" r="6.5"/><path d="M20,185.5 L23,182" stroke-width="1.3"/><path d="M18,177.5 h4 M20,177.5 v1.5"/></g><path d="M9,184 h6 M10,187 h5 M11,190 h4" stroke="#999" stroke-width="1"/><rect x="0" y="201" width="37" height="1" fill="#d6d6d6"/><g fill="none" stroke="#333" stroke-width="1.4"><rect x="11.5" y="210.5" width="14" height="16" rx="1.5"/><path d="M14,214 l1.2,1.2 l2,-2.2 M14,218 l1.2,1.2 l2,-2.2 M14,222 l1.2,1.2 l2,-2.2 M18.5,214.5 h5 M18.5,218.5 h5 M18.5,222.5 h5"/></g><g><rect x="10" y="891" width="10" height="6" rx="1" fill="#333"/><circle cx="20" cy="897" r="4" fill="#f9f9f9" stroke="#333" stroke-width="1.7"/><path d="M23,900 L26,903.5" stroke="#333" stroke-width="2"/></g><path d="M48,86 L62,86 L56.5,92.5 L56.5,99 L53.5,96.5 L53.5,92.5 Z" fill="none" stroke="#333" stroke-width="1.2"/><path d="M137.5,126 L137.5,113 L142.5,113 L144,115 L154,115 L154,126 Z" fill="none" stroke="#999" stroke-width="1"/><path d="M140,121 h5.5 M142.75,118.25 v5.5" stroke="#6f95d8" stroke-width="1.5"/><rect x="167" y="113" width="3.2" height="13" fill="#888"/><rect x="175.5" y="113" width="3.2" height="13" fill="#888"/><g fill="none" stroke="#333" stroke-width="1.5"><circle cx="201" cy="120" r="6.5"/><path d="M199,111.5 h4 M201,111.5 v2 M206,113 l1.5,-1.5 M201.5,120.5 L203.5,123"/></g><path d="M42.5,142.5 L47.5,147.5 L52.5,142.5" fill="none" stroke="#555" stroke-width="1.5"/><path d="M42.5,288 L47.5,293 L52.5,288" fill="none" stroke="#555" stroke-width="1.5"/><path d="M42.5,605.5 L47.5,610.5 L52.5,605.5" fill="none" stroke="#555" stroke-width="1.5"/><path d="M45,432.5 L50,437 L45,441.5" fill="none" stroke="#555" stroke-width="1.5"/><path d="M45,530.5 L50,535 L45,539.5" fill="none" stroke="#555" stroke-width="1.5"/><g stroke="#cccccc" stroke-width="1"><path d="M46.5,158 L46.5,254.5 M42,254.5 L51,254.5 M46.5,304 L46.5,400 M42,400 L51,400"/></g><circle cx="68" cy="169" r="2.8" fill="none" stroke="#555" stroke-width="0.9"/><circle cx="68" cy="169" r="1.2" fill="#555"/><path d="M61.5,187.0 L75,188.5 L75,200.5 L61.5,198.5 Z" fill="#e3e3e3" stroke="#aaa" stroke-width="0.9"/><path d="M68,187.7 L68,194.0 L75,195.0" fill="none" stroke="#aaa" stroke-width="0.9"/><path d="M61.5,211.5 L75,213 L75,225 L61.5,223 Z" fill="#e3e3e3" stroke="#aaa" stroke-width="0.9"/><path d="M68,212.2 L68,218.5 L75,219.5" fill="none" stroke="#aaa" stroke-width="0.9"/><path d="M61.5,235.5 L75,237 L75,249 L61.5,247 Z" fill="#e3e3e3" stroke="#aaa" stroke-width="0.9"/><path d="M68,236.2 L68,242.5 L75,243.5" fill="none" stroke="#aaa" stroke-width="0.9"/><g fill="none" stroke="#555" stroke-width="1"><path d="M50,259.5 L57,262.5 L57,270 L50,273 L43,270 L43,262.5 Z M43,262.5 L50,265.5 L57,262.5 M50,265.5 L50,273"/></g><path d="M62.5,297 L62.5,285 L67.5,285 L69,287 L76.5,287 L76.5,297 Z" fill="none" stroke="#666" stroke-width="1"/><path d="M62.5,443 L62.5,431 L67.5,431 L69,433 L76.5,433 L76.5,443 Z" fill="none" stroke="#666" stroke-width="1"/><path d="M62.5,541 L62.5,529 L67.5,529 L69,531 L76.5,531 L76.5,541 Z" fill="none" stroke="#666" stroke-width="1"/><path d="M62,322.5 L72,312.5 L74,314.5 L64,324.5 L61.5,325 Z" fill="none" stroke="#999" stroke-width="0.9"/><line x1="61" y1="326.5" x2="75" y2="326.5" stroke="#8aa8e0" stroke-width="0.9"/><rect x="62" y="334" width="13" height="13" rx="1.5" fill="#999" stroke="#555" stroke-width="1"/><rect x="68" y="334" width="7" height="6.5" fill="#ccc"/><rect x="62" y="340.5" width="6" height="6.5" fill="#777"/><path d="M61,357.5 L72,357.5 L75,359 L75,372 L61,372 Z" fill="#eee" stroke="#333" stroke-width="1.1"/><circle cx="64.5" cy="362" r="1.2" fill="#333"/><circle cx="68" cy="364" r="1.2" fill="#333"/><circle cx="64.5" cy="368" r="1.2" fill="#333"/><path d="M71,361 L71,370 L73,369" fill="none" stroke="#555" stroke-width="1"/><path d="M62,382 L73,382 Q76,383 74,386 L66,395 Q64,396 63,394 Z" fill="#f4f4f4" stroke="#333" stroke-width="1.2"/><circle cx="65.5" cy="385" r="1.2" fill="#333"/><circle cx="71" cy="385" r="1.2" fill="#333"/><circle cx="66" cy="390.5" r="1.2" fill="#333"/><path d="M45,418 L55,407 L58,410 L48,421 L44.5,421.5 Z" fill="#fff" stroke="#555" stroke-width="1"/><line x1="43" y1="422.5" x2="55" y2="422.5" stroke="#6f95d8" stroke-width="0.9"/><circle cx="55.5" cy="418.5" r="5.5" fill="#1f56c4"/><rect x="52.5" y="417.7" width="6" height="1.8" fill="#fff"/><g fill="#ccc"><circle cx="52" cy="456.5" r="4"/><circle cx="46" cy="465" r="4"/><circle cx="54.5" cy="464" r="4"/></g><g fill="none" stroke="#999" stroke-width="0.9"><path d="M44,485 Q46,479 51,479.5 Q56,480 56,484 L54,493 M44,485 L43,493 M47,486 L45.5,493 M51,486 L49.5,493"/><circle cx="50" cy="482.5" r="2"/></g><g fill="none" stroke="#999" stroke-width="0.9"><path d="M44,509.5 Q46,503.5 51,504.0 Q56,504.5 56,508.5 L54,517.5 M44,509.5 L43,517.5 M47,510.5 L45.5,517.5 M51,510.5 L49.5,517.5"/><circle cx="50" cy="507.0" r="2"/></g><circle cx="187.3" cy="265.7" r="7.5" fill="#73a0d0"/><ellipse cx="187.3" cy="265.7" rx="2.7" ry="3" fill="#fff"/><rect x="186.4" y="260.09999999999997" width="1.8" height="1.8" fill="#fff"/><rect x="186.4" y="269.5" width="1.8" height="1.8" fill="#fff"/><rect x="186.8" y="258.09999999999997" width="1" height="1.2" fill="#fff"/><rect x="186.8" y="272.09999999999997" width="1" height="1.2" fill="#fff"/><circle cx="187.3" cy="339.3" r="7.5" fill="#73a0d0"/><ellipse cx="187.3" cy="339.3" rx="2.7" ry="3" fill="#fff"/><rect x="186.4" y="333.7" width="1.8" height="1.8" fill="#fff"/><rect x="186.4" y="343.1" width="1.8" height="1.8" fill="#fff"/><rect x="186.8" y="331.7" width="1" height="1.2" fill="#fff"/><rect x="186.8" y="345.7" width="1" height="1.2" fill="#fff"/><circle cx="187.3" cy="363.5" r="7.5" fill="#73a0d0"/><ellipse cx="187.3" cy="363.5" rx="2.7" ry="3" fill="#fff"/><rect x="186.4" y="357.9" width="1.8" height="1.8" fill="#fff"/><rect x="186.4" y="367.3" width="1.8" height="1.8" fill="#fff"/><rect x="186.8" y="355.9" width="1" height="1.2" fill="#fff"/><rect x="186.8" y="369.9" width="1" height="1.2" fill="#fff"/><circle cx="187.3" cy="388.1" r="7.5" fill="#73a0d0"/><ellipse cx="187.3" cy="388.1" rx="2.7" ry="3" fill="#fff"/><rect x="186.4" y="382.5" width="1.8" height="1.8" fill="#fff"/><rect x="186.4" y="391.90000000000003" width="1.8" height="1.8" fill="#fff"/><rect x="186.8" y="380.5" width="1" height="1.2" fill="#fff"/><rect x="186.8" y="394.5" width="1" height="1.2" fill="#fff"/><circle cx="187.3" cy="485.3" r="7.5" fill="#73a0d0"/><ellipse cx="187.3" cy="485.3" rx="2.7" ry="3" fill="#fff"/><rect x="186.4" y="479.7" width="1.8" height="1.8" fill="#fff"/><rect x="186.4" y="489.1" width="1.8" height="1.8" fill="#fff"/><rect x="186.8" y="477.7" width="1" height="1.2" fill="#fff"/><rect x="186.8" y="491.7" width="1" height="1.2" fill="#fff"/><circle cx="187.3" cy="509.8" r="7.5" fill="#73a0d0"/><ellipse cx="187.3" cy="509.8" rx="2.7" ry="3" fill="#fff"/><rect x="186.4" y="504.2" width="1.8" height="1.8" fill="#fff"/><rect x="186.4" y="513.6" width="1.8" height="1.8" fill="#fff"/><rect x="186.8" y="502.2" width="1" height="1.2" fill="#fff"/><rect x="186.8" y="516.2" width="1" height="1.2" fill="#fff"/><circle cx="239.5" cy="893.5" r="7.5" fill="#73a0d0"/><ellipse cx="239.5" cy="893.5" rx="2.7" ry="3" fill="#fff"/><rect x="238.6" y="887.9" width="1.8" height="1.8" fill="#fff"/><rect x="238.6" y="897.3" width="1.8" height="1.8" fill="#fff"/><rect x="239.0" y="885.9" width="1" height="1.2" fill="#fff"/><rect x="239.0" y="899.9" width="1" height="1.2" fill="#fff"/><circle cx="429" cy="893.5" r="7.5" fill="#73a0d0"/><ellipse cx="429" cy="893.5" rx="2.7" ry="3" fill="#fff"/><rect x="428.1" y="887.9" width="1.8" height="1.8" fill="#fff"/><rect x="428.1" y="897.3" width="1.8" height="1.8" fill="#fff"/><rect x="428.5" y="885.9" width="1" height="1.2" fill="#fff"/><rect x="428.5" y="899.9" width="1" height="1.2" fill="#fff"/><g fill="#333"><circle cx="187" cy="461.5" r="2.5"/><rect x="186.3" y="453" width="1.4" height="1.4"/><rect x="186.3" y="456" width="1.4" height="1.4"/><rect x="186.3" y="466" width="1.4" height="1.4"/><rect x="186.3" y="469" width="1.4" height="1.4"/></g><path d="M61.5,634 L63.5,632 L67.5,632 L67.5,627.5 L69.5,626 L73.5,626 L75,627.5 L75,639.5 L63.5,639.5 L61.5,637.5 Z" fill="#fff" stroke="#555" stroke-width="0.9" stroke-linejoin="round"/><path d="M61.5,634 L63.5,635.5 L69.5,635.5 L69.5,627.5 L67.5,627.5 M69.5,627.5 L75,627.5 M63.5,635.5 L63.5,639.5 M69.5,635.5 L72,638" fill="none" stroke="#555" stroke-width="0.8"/><path d="M61.5,658.5 L63.5,656.5 L67.5,656.5 L67.5,652.0 L69.5,650.5 L73.5,650.5 L75,652.0 L75,664.0 L63.5,664.0 L61.5,662.0 Z" fill="#fff" stroke="#555" stroke-width="0.9" stroke-linejoin="round"/><path d="M61.5,658.5 L63.5,660.0 L69.5,660.0 L69.5,652.0 L67.5,652.0 M69.5,652.0 L75,652.0 M63.5,660.0 L63.5,664.0 M69.5,660.0 L72,662.5" fill="none" stroke="#555" stroke-width="0.8"/><path d="M61.5,683 L63.5,681 L67.5,681 L67.5,676.5 L69.5,675 L73.5,675 L75,676.5 L75,688.5 L63.5,688.5 L61.5,686.5 Z" fill="#fff" stroke="#555" stroke-width="0.9" stroke-linejoin="round"/><path d="M61.5,683 L63.5,684.5 L69.5,684.5 L69.5,676.5 L67.5,676.5 M69.5,676.5 L75,676.5 M63.5,684.5 L63.5,688.5 M69.5,684.5 L72,687" fill="none" stroke="#555" stroke-width="0.8"/><path d="M61.5,707.5 L63.5,705.5 L67.5,705.5 L67.5,701.0 L69.5,699.5 L73.5,699.5 L75,701.0 L75,713.0 L63.5,713.0 L61.5,711.0 Z" fill="#fff" stroke="#555" stroke-width="0.9" stroke-linejoin="round"/><path d="M61.5,707.5 L63.5,709.0 L69.5,709.0 L69.5,701.0 L67.5,701.0 M69.5,701.0 L75,701.0 M63.5,709.0 L63.5,713.0 M69.5,709.0 L72,711.5" fill="none" stroke="#555" stroke-width="0.8"/><path d="M46,894 h14 M53,887 v14" stroke="#555" stroke-width="2.2"/><path d="M78,892.5 L86.5,884.5 L90,888 L90,884.5 L93,884.5 L93,891 L95,892.5 L93,892.5 L93,901 L88.5,901 L88.5,896 L84.5,896 L84.5,901 L80,901 L80,892.5 Z" fill="#666"/><path d="M101,881 L106,893 L101,905" fill="none" stroke="#c8c8c8" stroke-width="1"/><path d="M101,881 L212,881 L218,893 L212,905 L101,905 L106,893 Z" fill="#fff"/><path d="M118,901 L118,886 L123,886 L124.5,888 L134.5,888 L134.5,901 Z" fill="none" stroke="#333" stroke-width="1.1"/><path d="M250,887 L255,885 L267,885 L267,901 L254,901 L250,898 Z" fill="#fff" stroke="#333" stroke-width="1"/><path d="M251,887.5 L254.5,887.5 L254.5,898 M251,887.5 L262,887.5 L262,894 L254.5,894" fill="#888" stroke="#444" stroke-width="0.7"/><g fill="#fff" stroke="#333" stroke-width="1"><path d="M440.5,887 L444,886 L444,901 L440.5,901 Z"/><path d="M445,886 L447,884 L449.5,884 L451,886 L451,901 L445,901 Z"/></g></svg>
<div class="a" style="left:147.00px;top:5.60px;font-size:21.74px;line-height:21.74px;color:#333;font-weight:bold;font-style:normal;transform:scaleX(0.9238);transform-origin:0 0;">1B - Practice Exercise Solutions - Metric</div>
<div class="a" style="left:538.50px;top:11.23px;font-size:14.49px;line-height:14.49px;color:#8a8a8a;font-weight:normal;font-style:normal;transform:scaleX(0.9857);transform-origin:0 0;-webkit-text-stroke:0.25px #8a8a8a;">Main</div>
<div class="a" style="left:35.00px;top:9.73px;font-size:14.49px;line-height:14.49px;color:#777;font-weight:normal;font-style:normal;transform:scaleX(1.1515);transform-origin:0 0;-webkit-text-stroke:0.25px #777;">onshape</div>
<div class="a" style="left:1395.00px;top:44.73px;font-size:14.49px;line-height:14.49px;color:#333;font-weight:normal;font-style:normal;transform:scaleX(0.8746);transform-origin:0 0;-webkit-text-stroke:0.25px #333;">Search tools...</div>
<div class="a" style="left:1483.00px;top:48.66px;font-size:9.86px;line-height:9.86px;color:#333;font-weight:normal;font-style:normal;transform:scaleX(1.1401);transform-origin:0 0;-webkit-text-stroke:0.25px #333;">alt/</div>
<div class="a" style="left:1516.00px;top:48.66px;font-size:9.86px;line-height:9.86px;color:#333;font-weight:normal;font-style:normal;transform:scaleX(1.0147);transform-origin:0 0;-webkit-text-stroke:0.25px #333;">c</div>
<div class="a" style="left:1694.00px;top:8.85px;font-size:13.77px;line-height:13.77px;color:#ffffff;font-weight:bold;font-style:normal;transform:scaleX(0.8622);transform-origin:0 0;">Share</div>
<div class="a" style="left:1820.00px;top:9.73px;font-size:14.49px;line-height:14.49px;color:#333;font-weight:normal;font-style:normal;transform:scaleX(0.8900);transform-origin:0 0;-webkit-text-stroke:0.25px #333;">Harry Cassidy</div>
<div class="a" style="left:81.00px;top:84.19px;font-size:13.48px;line-height:13.48px;color:#777;font-weight:normal;font-style:italic;transform:scaleX(0.8823);transform-origin:0 0;-webkit-text-stroke:0.25px #777;">Filter by name or type</div>
<div class="a" style="left:41.60px;top:111.42px;font-size:13.91px;line-height:13.91px;color:#333;font-weight:normal;font-style:normal;transform:scaleX(0.8905);transform-origin:0 0;-webkit-text-stroke:0.45px #333;">Features (23)</div>
<div class="a" style="left:59.50px;top:138.39px;font-size:13.48px;line-height:13.48px;color:#333;font-weight:normal;font-style:normal;transform:scaleX(0.9305);transform-origin:0 0;-webkit-text-stroke:0.25px #333;">Default geometry</div>
<div class="a" style="left:80.40px;top:162.74px;font-size:13.48px;line-height:13.48px;color:#333;font-weight:normal;font-style:normal;transform:scaleX(0.8864);transform-origin:0 0;-webkit-text-stroke:0.25px #333;">Origin</div>
<div class="a" style="left:80.40px;top:187.09px;font-size:13.48px;line-height:13.48px;color:#aaa;font-weight:normal;font-style:normal;transform:scaleX(0.9263);transform-origin:0 0;-webkit-text-stroke:0.25px #aaa;">Top</div>
<div class="a" style="left:80.40px;top:211.44px;font-size:13.48px;line-height:13.48px;color:#aaa;font-weight:normal;font-style:normal;transform:scaleX(0.9342);transform-origin:0 0;-webkit-text-stroke:0.25px #aaa;">Front</div>
<div class="a" style="left:80.40px;top:235.79px;font-size:13.48px;line-height:13.48px;color:#aaa;font-weight:normal;font-style:normal;transform:scaleX(0.8929);transform-origin:0 0;-webkit-text-stroke:0.25px #aaa;">Right</div>
<div class="a" style="left:62.20px;top:260.14px;font-size:13.48px;line-height:13.48px;color:#333;font-weight:normal;font-style:normal;transform:scaleX(0.8789);transform-origin:0 0;-webkit-text-stroke:0.25px #333;">Origin Cube</div>
<div class="a" style="left:81.40px;top:284.49px;font-size:13.48px;line-height:13.48px;color:#333;font-weight:normal;font-style:normal;transform:scaleX(0.8839);transform-origin:0 0;-webkit-text-stroke:0.25px #333;">Frame (4)</div>
<div class="a" style="left:81.40px;top:308.84px;font-size:13.48px;line-height:13.48px;color:#aaa;font-weight:normal;font-style:normal;transform:scaleX(0.8890);transform-origin:0 0;-webkit-text-stroke:0.25px #aaa;">Tube Sketch</div>
<div class="a" style="left:81.40px;top:333.19px;font-size:13.48px;line-height:13.48px;color:#333;font-weight:normal;font-style:normal;transform:scaleX(0.8692);transform-origin:0 0;-webkit-text-stroke:0.25px #333;">Tubes</div>
<div class="a" style="left:81.40px;top:357.54px;font-size:13.48px;line-height:13.48px;color:#333;font-weight:normal;font-style:normal;transform:scaleX(0.8976);transform-origin:0 0;-webkit-text-stroke:0.25px #333;">Tube Converter</div>
<div class="a" style="left:81.40px;top:381.89px;font-size:13.48px;line-height:13.48px;color:#333;font-weight:normal;font-style:normal;transform:scaleX(0.8566);transform-origin:0 0;-webkit-text-stroke:0.25px #333;">Gusset</div>
<div class="a" style="left:62.60px;top:406.24px;font-size:13.48px;line-height:13.48px;color:#222;font-weight:bold;font-style:normal;transform:scaleX(0.8827);transform-origin:0 0;">Gearbox Layout</div>
<div class="a" style="left:81.40px;top:430.59px;font-size:13.48px;line-height:13.48px;color:#333;font-weight:normal;font-style:normal;transform:scaleX(0.8730);transform-origin:0 0;-webkit-text-stroke:0.25px #333;">GB Plates (6)</div>
<div class="a" style="left:64.00px;top:454.94px;font-size:13.48px;line-height:13.48px;color:#aaa;font-weight:normal;font-style:italic;transform:scaleX(0.8021);transform-origin:0 0;-webkit-text-stroke:0.25px #aaa;">?</div>
<div class="a" style="left:64.00px;top:479.29px;font-size:13.48px;line-height:13.48px;color:#aaa;font-weight:normal;font-style:italic;transform:scaleX(0.8021);transform-origin:0 0;-webkit-text-stroke:0.25px #aaa;">?</div>
<div class="a" style="left:64.00px;top:503.64px;font-size:13.48px;line-height:13.48px;color:#aaa;font-weight:normal;font-style:italic;transform:scaleX(0.8021);transform-origin:0 0;-webkit-text-stroke:0.25px #aaa;">?</div>
<div class="a" style="left:81.40px;top:527.99px;font-size:13.48px;line-height:13.48px;color:#333;font-weight:normal;font-style:normal;transform:scaleX(0.8944);transform-origin:0 0;-webkit-text-stroke:0.25px #333;">Pocketing (4)</div>
<div class="a" style="left:59.60px;top:601.39px;font-size:13.48px;line-height:13.48px;color:#333;font-weight:normal;font-style:normal;transform:scaleX(0.9035);transform-origin:0 0;-webkit-text-stroke:0.25px #333;">Parts (4)</div>
<div class="a" style="left:80.30px;top:625.99px;font-size:13.48px;line-height:13.48px;color:#333;font-weight:normal;font-style:normal;transform:scaleX(0.9160);transform-origin:0 0;-webkit-text-stroke:0.25px #333;">Tube 1&quot;x0.984&quot;x6.89&quot;</div>
<div class="a" style="left:80.30px;top:650.09px;font-size:13.48px;line-height:13.48px;color:#333;font-weight:normal;font-style:normal;transform:scaleX(0.9160);transform-origin:0 0;-webkit-text-stroke:0.25px #333;">Tube 1&quot;x0.984&quot;x6.89&quot;</div>
<div class="a" style="left:80.30px;top:675.09px;font-size:13.48px;line-height:13.48px;color:#333;font-weight:normal;font-style:normal;transform:scaleX(0.9156);transform-origin:0 0;-webkit-text-stroke:0.25px #333;">Tube 1&quot;x0.984&quot;x7.874&quot;</div>
<div class="a" style="left:80.30px;top:699.09px;font-size:13.48px;line-height:13.48px;color:#333;font-weight:normal;font-style:normal;transform:scaleX(0.8913);transform-origin:0 0;-webkit-text-stroke:0.25px #333;">Frame Gusset</div>
<div class="a" style="left:141.00px;top:887.59px;font-size:13.48px;line-height:13.48px;color:#555;font-weight:normal;font-style:normal;transform:scaleX(0.9373);transform-origin:0 0;-webkit-text-stroke:0.25px #555;">Exercise 3</div>
<div class="a" style="left:271.00px;top:887.59px;font-size:13.48px;line-height:13.48px;color:#555;font-weight:normal;font-style:normal;transform:scaleX(0.9571);transform-origin:0 0;-webkit-text-stroke:0.25px #555;">Exercise 3 Assembly</div>
<div class="a" style="left:460.00px;top:887.59px;font-size:13.48px;line-height:13.48px;color:#333;font-weight:normal;font-style:normal;transform:scaleX(0.9523);transform-origin:0 0;-webkit-text-stroke:0.25px #333;">Exercise 3 Part Studio</div>
<div class="b" style="left:231px;top:72px;width:206px;height:206px;background:#fff;box-shadow:0 1px 6px rgba(0,0,0,0.25)"></div>
<div class="b" style="left:231px;top:98px;width:206px;height:1px;background:#d8d8d8"></div>
<div class="b" style="left:384px;top:72px;width:27px;height:26px;background:#0c990c"></div>
<div class="b" style="left:233.5px;top:104.5px;width:176px;height:39px;border:1px solid #d0d0d0;border-radius:3px"></div>
<div class="a" style="left:236.50px;top:77.22px;font-size:13.91px;line-height:13.91px;color:#2a2a2a;font-weight:normal;font-style:normal;transform:scaleX(0.8708);transform-origin:0 0;-webkit-text-stroke:0.35px #2a2a2a;">Gearbox Layout</div>
<div class="a" style="left:239.00px;top:110.93px;font-size:9.42px;line-height:9.42px;color:#555;font-weight:normal;font-style:normal;transform:scaleX(0.9917);transform-origin:0 0;-webkit-text-stroke:0.25px #555;">Sketch plane</div>
<div class="a" style="left:240.60px;top:124.80px;font-size:14.06px;line-height:14.06px;color:#444;font-weight:normal;font-style:normal;transform:scaleX(0.8523);transform-origin:0 0;-webkit-text-stroke:0.25px #444;">Face of Tubes</div>
<div class="b" style="left:234.5px;top:157.5px;width:11px;height:11px;border:1px solid #888;border-radius:2px;background:#fff"></div>
<div class="a" style="left:250.00px;top:156.00px;font-size:14.06px;line-height:14.06px;color:#444;font-weight:normal;font-style:normal;transform:scaleX(0.8876);transform-origin:0 0;-webkit-text-stroke:0.25px #444;">Disable imprinting</div>
<div class="b" style="left:234.5px;top:182.3px;width:11px;height:11px;border:1px solid #888;border-radius:2px;background:#fff"></div>
<div class="a" style="left:250.00px;top:180.70px;font-size:14.06px;line-height:14.06px;color:#444;font-weight:normal;font-style:normal;transform:scaleX(0.8818);transform-origin:0 0;-webkit-text-stroke:0.25px #444;">Show constraints</div>
<div class="b" style="left:234.5px;top:207.7px;width:11px;height:11px;border:1px solid #888;border-radius:2px;background:#fff"></div>
<div class="a" style="left:250.00px;top:206.40px;font-size:14.06px;line-height:14.06px;color:#444;font-weight:normal;font-style:normal;transform:scaleX(0.8634);transform-origin:0 0;-webkit-text-stroke:0.25px #444;">Show expressions</div>
<div class="b" style="left:234.5px;top:233.8px;width:11px;height:11px;background:#1f56c4;border-radius:2px"></div>
<div class="a" style="left:250.00px;top:232.30px;font-size:14.06px;line-height:14.06px;color:#444;font-weight:normal;font-style:normal;transform:scaleX(0.8776);transform-origin:0 0;-webkit-text-stroke:0.25px #444;">Show errors</div>
<div class="b" style="left:342px;top:254px;width:21px;height:21px;border:1px solid #999;border-radius:3px"></div>
<div class="b" style="left:367px;top:254px;width:46px;height:21px;border:1px solid #aaa;border-radius:3px"></div>
<div class="a" style="left:377.00px;top:259.23px;font-size:11.30px;line-height:11.30px;color:#333;font-weight:normal;font-style:normal;transform:scaleX(1.0110);transform-origin:0 0;-webkit-text-stroke:0.25px #333;">Final</div>
<svg style="left:0;top:0" width="1919" height="909" viewBox="0 0 1919 909" font-family="Liberation Sans, sans-serif"><path d="M1499,52.8 h2.6 l3,4 h2.3 M1503.6,52.8 h3.4" fill="none" stroke="#333" stroke-width="1"/><path d="M391,85 L395.5,89.5 L404,80.5" fill="none" stroke="#fff" stroke-width="2.6"/><path d="M419.5,80 L429,89.5 M429,80 L419.5,89.5" stroke="#d42a36" stroke-width="2.4"/><path d="M391.5,129.5 L397,135 M397,129.5 L391.5,135" stroke="#555" stroke-width="1.1"/><circle cx="422.3" cy="115.8" r="7.3" fill="none" stroke="#444" stroke-width="1.2"/><circle cx="422.3" cy="115.8" r="5.2" fill="none" stroke="#444" stroke-width="0.9"/><path d="M422.3,111.5 L422.3,116 L426.5,116" fill="none" stroke="#444" stroke-width="1.2"/><path d="M236.8,239.5 L239.3,242 L243.5,236.8" fill="none" stroke="#fff" stroke-width="1.8"/><circle cx="352.2" cy="264.4" r="7.8" fill="none" stroke="#333" stroke-width="1"/><path d="M349,267.5 L356.5,259 L359,261.5 L351.5,269 Z M355,260.5 L357.5,263" fill="none" stroke="#333" stroke-width="1"/><path d="M346,268.5 L358,268.5" stroke="#2a5bbf" stroke-width="1.3"/><path d="M357.5,269.5 L360,272" stroke="#333" stroke-width="1.8"/><circle cx="426.5" cy="267.5" r="5.8" fill="#a8a8a8"/><text x="423.6" y="271.3" font-size="9" font-weight="bold" fill="#fff">?</text></svg>
</body></html>
